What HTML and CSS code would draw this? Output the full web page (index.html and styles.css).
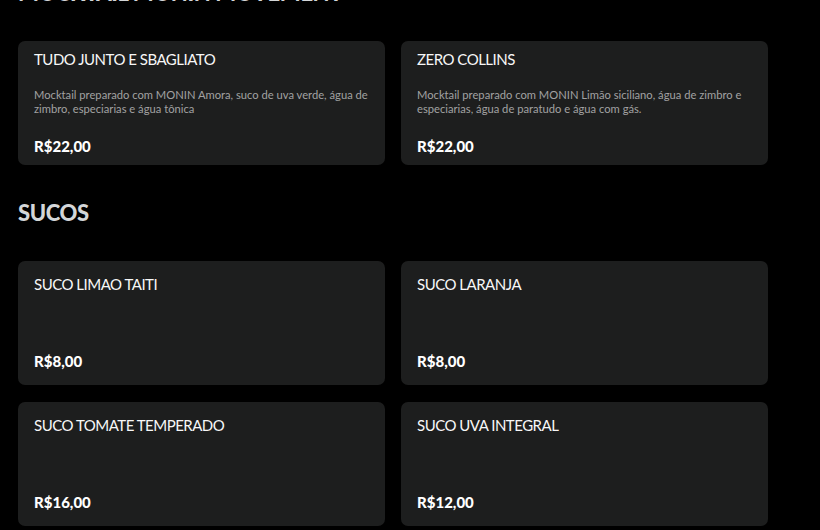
FILE: index.html
```html
<!DOCTYPE html>
<html lang="pt-BR">
<head>
	<meta charset="UTF-8">
	<title>Cardápio</title>
	<link rel="stylesheet" href="styles.css">
</head>
<body>
	<div id="menu">
		<div class="section">
			<h2 class="title">MOCKTAIL MONIN MOVEMENT</h2>
			<div class="list">
				<div class="item">
					<div class="name">TUDO JUNTO E SBAGLIATO</div>
					<p class="desc">Mocktail preparado com MONIN Amora, suco de uva verde, água de zimbro, especiarias e água tônica</p>
					<div class="price">R$22,00</div>
				</div>
				<div class="item">
					<div class="name">ZERO COLLINS</div>
					<p class="desc">Mocktail preparado com MONIN Limão siciliano, água de zimbro e especiarias, água de paratudo e água com gás.</p>
					<div class="price">R$22,00</div>
				</div>
			</div>
		</div>
		<div class="section">
			<h2 class="title">SUCOS</h2>
			<div class="list">
				<div class="item">
					<div class="name">SUCO LIMAO TAITI</div>
					<p class="desc"></p>
					<div class="price">R$8,00</div>
				</div>
				<div class="item">
					<div class="name">SUCO LARANJA</div>
					<p class="desc"></p>
					<div class="price">R$8,00</div>
				</div>
				<div class="item">
					<div class="name">SUCO TOMATE TEMPERADO</div>
					<p class="desc"></p>
					<div class="price">R$16,00</div>
				</div>
				<div class="item">
					<div class="name">SUCO UVA INTEGRAL</div>
					<p class="desc"></p>
					<div class="price">R$12,00</div>
				</div>
			</div>
		</div>
	</div>
</body>
</html>
```

FILE: styles.css
```css
*{
	padding: 0;
	margin: 0;
	box-sizing: border-box;
}
html,body{
	width: 100%;
	height: 100%;
	background-color: #000;
	overflow: hidden;
}
body{
	font-family: Lato, "Liberation Sans", sans-serif;
	color: #f2f2f2;
}
#menu{
	margin-top: -22px;
	padding: 0 18px;
}
.section{
	margin-bottom: 33px;
}
.title{
	font-size: 22px;
	line-height: 30px;
	font-weight: 900;
	letter-spacing: -0.4px;
	color: #d3d6d8;
	margin-bottom: 33px;
}
.list{
	display: grid;
	grid-template-columns: 367px 367px;
	column-gap: 16px;
	row-gap: 17px;
}
.item{
	height: 124px;
	padding: 0 16px 1px;
	border-radius: 7px;
	background-color: #1d1e1e;
	display: flex;
	flex-direction: column;
	justify-content: center;
}
.name{
	font-size: 15px;
	line-height: 18px;
	letter-spacing: -0.5px;
	color: #f7f7f7;
}
.desc{
	font-size: 11.2px;
	line-height: 14px;
	color: #a2a2a2;
	min-height: 18px;
	margin: 20px 0 21px;
}
.price{
	font-size: 15px;
	line-height: 18px;
	font-weight: 900;
	color: #fff;
}
```
